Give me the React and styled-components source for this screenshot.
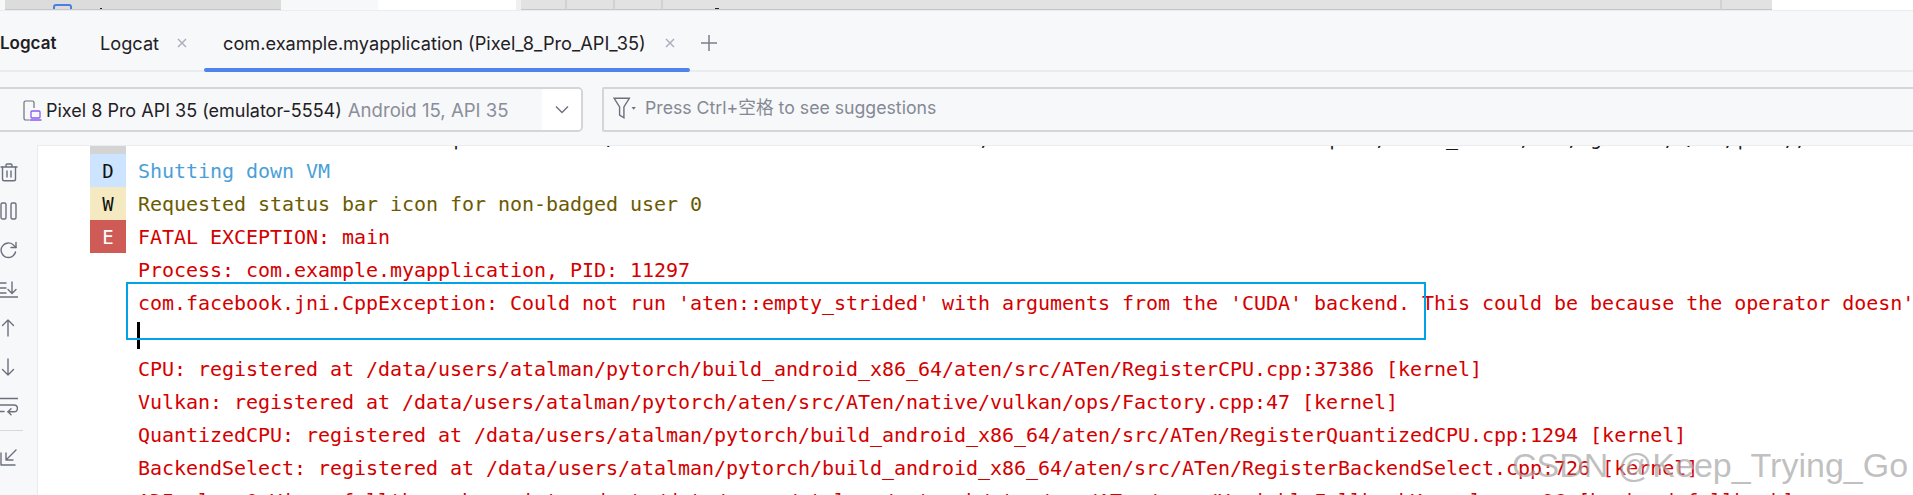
import React from 'react'
import styled, { createGlobalStyle } from 'styled-components'

const GlobalStyle = createGlobalStyle`
  html, body {
    margin: 0;
    padding: 0;
    background: #f7f8fa;
  }
`

const clippedMarks = [
  [26, '|'], [39, '/'], [70, ','], [99, '|'], [103, ','], [109, '_'], [115, ','],
  [119, ','], [121, 'g'], [127, ','], [129, '/'], [132, ','], [133, '|'], [137, ','], [138, ','],
]
const clippedLine = clippedMarks.reduce(
  (line, [col, ch]) => line.padEnd(col, ' ') + ch,
  ''
)

const logRows = [
  { level: 'V', kind: 'verbose', text: clippedLine },
  { level: 'D', kind: 'debug', text: 'Shutting down VM' },
  { level: 'W', kind: 'warn', text: 'Requested status bar icon for non-badged user 0' },
  { level: 'E', kind: 'error', text: 'FATAL EXCEPTION: main' },
  { kind: 'error', text: 'Process: com.example.myapplication, PID: 11297' },
  {
    kind: 'error',
    text: "com.facebook.jni.CppException: Could not run 'aten::empty_strided' with arguments from the 'CUDA' backend. This could be because the operator doesn't exist for this backend, or was omitted during the selective/custom build process",
  },
  { kind: 'error', cursor: true, text: '' },
  { kind: 'error', text: 'CPU: registered at /data/users/atalman/pytorch/build_android_x86_64/aten/src/ATen/RegisterCPU.cpp:37386 [kernel]' },
  { kind: 'error', text: 'Vulkan: registered at /data/users/atalman/pytorch/aten/src/ATen/native/vulkan/ops/Factory.cpp:47 [kernel]' },
  { kind: 'error', text: 'QuantizedCPU: registered at /data/users/atalman/pytorch/build_android_x86_64/aten/src/ATen/RegisterQuantizedCPU.cpp:1294 [kernel]' },
  { kind: 'error', text: 'BackendSelect: registered at /data/users/atalman/pytorch/build_android_x86_64/aten/src/ATen/RegisterBackendSelect.cpp:726 [kernel]' },
  { kind: 'error', text: 'ADInplaceOrView: fallthrough registered at /data/users/atalman/pytorch/aten/src/ATen/core/VariableFallbackKernel.cpp:96 [backend fallback]' },
]

const textColors = {
  verbose: '#1a1a1a',
  debug: '#4a9fd8',
  warn: '#6b5a00',
  error: '#d40000',
}

const levelColors = {
  verbose: '#d4d4d4',
  debug: '#cce4ff',
  warn: '#f5e9c1',
  error: '#cf5b56',
}

const Page = styled.div`
  position: relative;
  width: 1913px;
  height: 495px;
  overflow: hidden;
  display: flex;
  flex-direction: column;
  background: #f7f8fa;
  font-family: Inter, "Noto Sans CJK SC", sans-serif;
`

const TopStrip = styled.div`
  display: flex;
  height: 10px;
  flex-shrink: 0;
  border-bottom: 1px solid #ebecf0;
`

const Segment = styled.div`
  position: relative;
  width: ${(p) => p.$width}px;
  flex: ${(p) => (p.$grow ? 1 : 'none')};
  height: 10px;
  overflow: hidden;
  box-sizing: border-box;
  background: ${(p) => p.$bg};
  border-bottom: ${(p) => (p.$shelf ? '1px solid #c6c6c6' : 'none')};
  border-right: ${(p) => (p.$divider ? '2px solid #d2d2d2' : 'none')};
`

const Tick = styled.span`
  position: absolute;
  left: ${(p) => p.$left}px;
  top: 8px;
  width: ${(p) => p.$w}px;
  height: 2px;
  background: #1c2430;
`

const StripIcon = styled.span`
  position: absolute;
  left: 48px;
  top: 4px;
  width: 15px;
  height: 12px;
  border: 2px solid #4a7fe0;
  border-radius: 3px;
`

const TabBar = styled.div`
  display: flex;
  align-items: stretch;
  height: 61px;
  flex-shrink: 0;
  box-sizing: border-box;
  border-bottom: 2px solid #ebecf0;
  font-size: 18.2px;
  color: #1f2024;
`

const PanelTitle = styled.div`
  width: 100px;
  display: flex;
  align-items: center;
  font-size: 17px;
  font-weight: 600;
  padding-top: 5px;
`

const Tab = styled.div`
  position: relative;
  display: flex;
  align-items: center;
  width: ${(p) => p.$width}px;
  padding-left: ${(p) => p.$pad}px;
  box-sizing: border-box;
  padding-top: 5px;
  white-space: nowrap;
  &::after {
    content: '';
    display: ${(p) => (p.$active ? 'block' : 'none')};
    position: absolute;
    left: 0;
    right: 0;
    bottom: -2px;
    height: 4px;
    border-radius: 2px;
    background: #4f84ed;
  }
`

const TabClose = styled.svg`
  width: 12px;
  height: 12px;
  flex-shrink: 0;
  margin-left: ${(p) => p.$gap}px;
  stroke: #a8adbd;
  stroke-width: 1.4;
  fill: none;
`

const AddTab = styled.svg`
  width: 18px;
  height: 18px;
  margin-left: 10px;
  align-self: center;
  margin-top: 5px;
  stroke: #7b7f8c;
  stroke-width: 1.5;
  fill: none;
`

const FilterRow = styled.div`
  display: flex;
  gap: 19px;
  height: 73px;
  flex-shrink: 0;
  box-sizing: border-box;
  padding-top: 15px;
`

const DeviceSelect = styled.div`
  display: flex;
  align-items: stretch;
  width: 587px;
  height: 45px;
  margin-left: -4px;
  flex-shrink: 0;
  box-sizing: border-box;
  border: 2px solid #d3d5db;
  border-radius: 5px;
  overflow: hidden;
`

const DeviceLabel = styled.div`
  flex: 1;
  display: flex;
  align-items: center;
  padding: 1px 0 0 24px;
  font-size: 18px;
  white-space: nowrap;
  color: #1f2024;
`

const DeviceMeta = styled.span`
  margin-left: 6px;
  font-size: 18.6px;
  color: #8b8e99;
`

const DeviceIcon = styled.svg`
  width: 20px;
  height: 21px;
  margin-right: 4px;
  flex-shrink: 0;
  fill: none;
`

const ChevronCell = styled.div`
  width: 39px;
  display: flex;
  align-items: center;
  justify-content: center;
  background: #fff;
`

const Chevron = styled.svg`
  width: 14px;
  height: 9px;
  stroke: #6c707e;
  stroke-width: 1.4;
  fill: none;
`

const FilterBox = styled.div`
  flex: 1;
  display: flex;
  align-items: center;
  height: 45px;
  margin-right: -4px;
  padding-left: 9px;
  padding-bottom: 8px;
  box-sizing: border-box;
  border: 2px solid #d3d5db;
  border-radius: 2px;
  font-size: 17.7px;
  color: #858995;
`

const FilterIcon = styled.svg`
  width: 24px;
  height: 26px;
  margin: 4px 8px 0 0;
  flex-shrink: 0;
  fill: none;
  stroke: #6c707e;
  stroke-width: 1.3;
`

const Body = styled.div`
  flex: 1;
  display: flex;
  min-height: 0;
`

const Sidebar = styled.div`
  width: 37px;
  flex-shrink: 0;
  padding-top: 7px;
  box-sizing: border-box;
`

const ToolIcon = styled.div`
  display: flex;
  align-items: center;
  height: 39px;
`

const ToolDivider = styled.div`
  width: 23px;
  height: 1px;
  margin: 5px 0 6px;
  background: #d6d8de;
`

const ToolSvg = styled.svg`
  width: 18px;
  height: 20px;
  fill: none;
  stroke: #6c707e;
  stroke-width: 1.4;
  stroke-linecap: round;
  stroke-linejoin: round;
`

const LogPanel = styled.div`
  flex: 1;
  min-width: 0;
  box-sizing: border-box;
  overflow: hidden;
  background: #fff;
  border-top: 1px solid #ebecf0;
  border-left: 1px solid #ebecf0;
`

const LogRow = styled.div`
  display: flex;
  height: 33px;
  padding-left: 52px;
  &:first-child {
    margin-top: -25px;
  }
`

const Level = styled.div`
  width: 36px;
  flex-shrink: 0;
  text-align: center;
  background: ${(p) => p.$bg || 'transparent'};
  color: ${(p) => (p.$kind === 'error' ? '#fff' : '#111')};
  font: 19px/35px "DejaVu Sans Mono", monospace;
`

const LogText = styled.div`
  margin-left: 12px;
  white-space: pre;
  font: 20px/35px "DejaVu Sans Mono", monospace;
  letter-spacing: -0.04px;
  color: ${(p) => p.$color};
`

const Caret = styled.span`
  display: block;
  width: 3px;
  height: 27px;
  margin: 3px 0 0 -1px;
  background: #000;
`

const Callout = styled.div`
  position: absolute;
  left: 126px;
  top: 282px;
  width: 1300px;
  height: 58px;
  box-sizing: border-box;
  border: 2px solid #00a2e8;
  pointer-events: none;
`

const Watermark = styled.div`
  position: absolute;
  left: 1512px;
  top: 445px;
  white-space: nowrap;
  font: 34px/40px "Liberation Sans", Arial, sans-serif;
  color: rgba(130, 130, 130, 0.5);
  text-shadow: 1px 1px 1px rgba(255, 255, 255, 0.5);
  pointer-events: none;
`

const Cross = ({ gap }) => (
  <TabClose $gap={gap} viewBox="0 0 12 12">
    <path d="M2 2l8 8M10 2l-8 8" />
  </TabClose>
)

const toolIcons = [
  <>
    <path d="M1 5h16M6 5V3.2C6 2.5 6.5 2 7.2 2h3.6c.7 0 1.2.5 1.2 1.2V5" />
    <path d="M2.5 5v12c0 1 .7 1.8 1.8 1.8h9.4c1.1 0 1.8-.8 1.8-1.8V5" />
    <path d="M7 9v6M11 9v6" />
  </>,
  <>
    <rect x="1" y="2" width="5" height="16" rx="1.5" />
    <rect x="11" y="2" width="5" height="16" rx="1.5" />
  </>,
  <>
    <path d="M15.5 12a7.3 7.3 0 1 1-1.6-6.6L16 7.5" />
    <path d="M16 2.5v5h-5" />
  </>,
  <>
    <path d="M0 4h6M0 9h6M0 14h6M0 18h18" />
    <path d="M12 3v11M8 10.5l4 4 4-4" />
  </>,
  <path d="M8 18V2M2.5 7.5L8 2l5.5 5.5" />,
  <path d="M8 2v16M2.5 12.5L8 18l5.5-5.5" />,
  <>
    <path d="M0 2.5h18M0 9h14a3.2 3.2 0 0 1 0 6.8H8" />
    <path d="M11 12.8l-3 3 3 3M0 15.5h4" />
  </>,
  <>
    <path d="M1 6v12h14M16 3L6 13M6 6v7h7" />
  </>,
]

const App = () => {
  return (
    <Page>
      <GlobalStyle />
      <TopStrip>
        <Segment $width={5} $bg="#f7f8fa" />
        <Segment $width={276} $bg="#dcdcdc" $shelf>
          <StripIcon />
          <Tick $left={95} $w={2} />
        </Segment>
        <Segment $width={97} $bg="#f7f8fa" />
        <Segment $width={138} $bg="#ffffff" />
        <Segment $width={5} $bg="#f0f0f1" />
        <Segment $width={46} $bg="#e2e2e2" $shelf $divider />
        <Segment $width={48} $bg="#e2e2e2" $shelf $divider />
        <Segment $width={48} $bg="#e2e2e2" $shelf $divider />
        <Segment $width={1059} $bg="#e2e2e2" $shelf $divider>
          <Tick $left={52} $w={4} />
        </Segment>
        <Segment $width={50} $bg="#e2e2e2" $shelf />
        <Segment $grow $bg="#ffffff" />
      </TopStrip>

      <TabBar>
        <PanelTitle>Logcat</PanelTitle>
        <Tab $width={104} $pad={0}>
          Logcat
          <Cross gap={17} />
        </Tab>
        <Tab $width={486} $pad={19} $active>
          com.example.myapplication (Pixel_8_Pro_API_35)
          <Cross gap={18} />
        </Tab>
        <AddTab viewBox="0 0 18 18">
          <path d="M9 1v16M1 9h16" />
        </AddTab>
      </TabBar>

      <FilterRow>
        <DeviceSelect>
          <DeviceLabel>
            <DeviceIcon viewBox="0 0 20 21">
              <path d="M7 20H3.5C2.7 20 2 19.3 2 18.5V2.5C2 1.7 2.7 1 3.5 1h7c.8 0 1.5.7 1.5 1.5V8" stroke="#6c707e" strokeWidth="1.2" />
              <rect x="9" y="11" width="9" height="7" rx="1" stroke="#8a5cf0" strokeWidth="1.3" />
              <path d="M7.5 20h12" stroke="#8a5cf0" strokeWidth="1.3" />
            </DeviceIcon>
            Pixel 8 Pro API 35 (emulator-5554)
            <DeviceMeta>Android 15, API 35</DeviceMeta>
          </DeviceLabel>
          <ChevronCell>
            <Chevron viewBox="0 0 14 9">
              <path d="M1 1.5l6 6 6-6" />
            </Chevron>
          </ChevronCell>
        </DeviceSelect>
        <FilterBox>
          <FilterIcon viewBox="0 0 22 24">
            <path d="M1 3h14L10 11v10l-4-2.5V11z" />
            <path d="M17 11h4l-2 2.5z" fill="#6c707e" stroke="none" />
          </FilterIcon>
          Press Ctrl+空格 to see suggestions
        </FilterBox>
      </FilterRow>

      <Body>
        <Sidebar>
          {toolIcons.slice(0, 7).map((icon, i) => (
            <ToolIcon key={i}>
              <ToolSvg viewBox="0 0 18 20">{icon}</ToolSvg>
            </ToolIcon>
          ))}
          <ToolDivider />
          <ToolIcon>
            <ToolSvg viewBox="0 0 18 20">{toolIcons[7]}</ToolSvg>
          </ToolIcon>
        </Sidebar>
        <LogPanel>
          {logRows.map((row, i) => (
            <LogRow key={i}>
              <Level $bg={row.level && levelColors[row.kind]} $kind={row.kind}>
                {row.level === 'V' ? '' : row.level}
              </Level>
              <LogText $color={textColors[row.kind]}>
                {row.cursor ? <Caret /> : row.text}
              </LogText>
            </LogRow>
          ))}
        </LogPanel>
      </Body>

      <Callout />
      <Watermark>CSDN @Keep_Trying_Go</Watermark>
    </Page>
  )
}

export default App
